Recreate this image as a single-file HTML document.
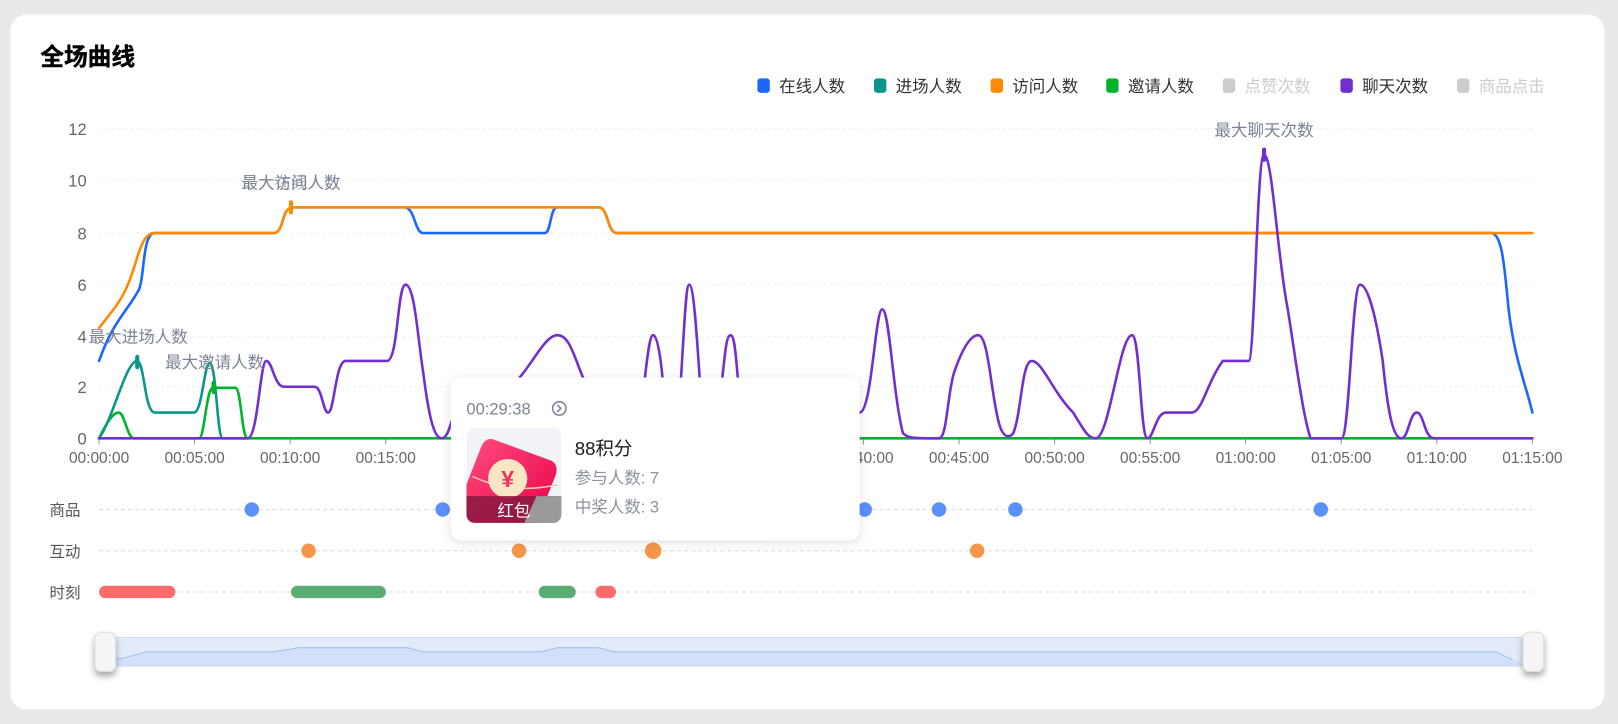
<!DOCTYPE html>
<html><head><meta charset="utf-8"><style>
html,body{margin:0;padding:0;width:1618px;height:724px;overflow:hidden;background:#e8e9eb}
svg{display:block}
text{font-family:"Liberation Sans","Noto Sans CJK SC",sans-serif}
</style></head><body>
<svg width="1618" height="724" viewBox="0 0 1568 702" preserveAspectRatio="none" xmlns="http://www.w3.org/2000/svg">
<defs>
<filter id="sh" x="-10%" y="-20%" width="120%" height="150%"><feDropShadow dx="0" dy="2" stdDeviation="5" flood-color="#000" flood-opacity="0.13"/></filter>
<filter id="hs" x="-100%" y="-50%" width="300%" height="220%"><feDropShadow dx="0" dy="4" stdDeviation="3" flood-color="#000" flood-opacity="0.35"/></filter>
<linearGradient id="rg" x1="0" y1="0" x2="1" y2="1"><stop offset="0" stop-color="#ff4d7e"/><stop offset="1" stop-color="#e8004a"/></linearGradient>
<clipPath id="ic"><rect x="452" y="415" width="92" height="92" rx="8"/></clipPath>
</defs>
<rect x="0" y="0" width="1568" height="702" fill="#e8e9eb"/>
<rect x="10" y="14" width="1545" height="674" rx="16" fill="#fff"/>
<text x="39" y="63" font-size="23" font-weight="bold" fill="#000" stroke="#000" stroke-width="0.4">全场曲线</text>
<!-- legend -->
<g font-size="16" fill="#333">
<rect x="734" y="76" width="12" height="14" rx="3" fill="#1a66ff"/><text x="755" y="89">在线人数</text>
<rect x="847" y="76" width="12" height="14" rx="3" fill="#0a968a"/><text x="868" y="89">进场人数</text>
<rect x="960" y="76" width="12" height="14" rx="3" fill="#ff8a00"/><text x="981" y="89">访问人数</text>
<rect x="1072" y="76" width="12" height="14" rx="3" fill="#00b42a"/><text x="1093" y="89">邀请人数</text>
<rect x="1185" y="76" width="12" height="14" rx="3" fill="#ccc"/><text x="1206" y="89" fill="#ccc">点赞次数</text>
<rect x="1299" y="76" width="12" height="14" rx="3" fill="#722ed1"/><text x="1320" y="89">聊天次数</text>
<rect x="1412" y="76" width="12" height="14" rx="3" fill="#ccc"/><text x="1433" y="89" fill="#ccc">商品点击</text>
</g>
<!-- grid -->
<g stroke="#eceef1" stroke-width="1" stroke-dasharray="3 3">
<line x1="96" y1="125" x2="1485" y2="125"/><line x1="96" y1="175" x2="1485" y2="175"/><line x1="96" y1="226" x2="1485" y2="226"/><line x1="96" y1="276" x2="1485" y2="276"/><line x1="96" y1="326" x2="1485" y2="326"/><line x1="96" y1="375" x2="1485" y2="375"/>
</g>
<g font-size="16" fill="#666" text-anchor="end">
<text x="84" y="131">12</text><text x="84" y="181">10</text><text x="84" y="232">8</text><text x="84" y="282">6</text><text x="84" y="332">4</text><text x="84" y="381">2</text><text x="84" y="431">0</text>
</g>
<line x1="96" y1="425" x2="1485" y2="425" stroke="#999" stroke-width="1"/>
<g stroke="#999" stroke-width="1">
<line x1="96" y1="425" x2="96" y2="431"/><line x1="188.6" y1="425" x2="188.6" y2="431"/><line x1="281.2" y1="425" x2="281.2" y2="431"/><line x1="373.8" y1="425" x2="373.8" y2="431"/><line x1="466.4" y1="425" x2="466.4" y2="431"/><line x1="559" y1="425" x2="559" y2="431"/><line x1="651.6" y1="425" x2="651.6" y2="431"/><line x1="744.2" y1="425" x2="744.2" y2="431"/><line x1="836.8" y1="425" x2="836.8" y2="431"/><line x1="929.4" y1="425" x2="929.4" y2="431"/><line x1="1022" y1="425" x2="1022" y2="431"/><line x1="1114.6" y1="425" x2="1114.6" y2="431"/><line x1="1207.2" y1="425" x2="1207.2" y2="431"/><line x1="1299.8" y1="425" x2="1299.8" y2="431"/><line x1="1392.4" y1="425" x2="1392.4" y2="431"/><line x1="1485" y1="425" x2="1485" y2="431"/>
</g>
<g font-size="15" fill="#666" text-anchor="middle">
<text x="96" y="449">00:00:00</text><text x="188.6" y="449">00:05:00</text><text x="281.2" y="449">00:10:00</text><text x="373.8" y="449">00:15:00</text><text x="466.4" y="449">00:20:00</text><text x="559" y="449">00:25:00</text><text x="651.6" y="449">00:30:00</text><text x="744.2" y="449">00:35:00</text><text x="836.8" y="449">00:40:00</text><text x="929.4" y="449">00:45:00</text><text x="1022" y="449">00:50:00</text><text x="1114.6" y="449">00:55:00</text><text x="1207.2" y="449">01:00:00</text><text x="1299.8" y="449">01:05:00</text><text x="1392.4" y="449">01:10:00</text><text x="1485" y="449">01:15:00</text>
</g>
<!-- lines -->
<g fill="none" stroke-width="2.5" stroke-linejoin="round" stroke-linecap="round">
<path stroke="#00b42a" d="M96 425 C104 408 110 400 115 400 C121 400 123 425 130 425 L193 425 C198 425 200 377 206 376 L228 376 C234 376 234 425 240 425 L1390 425"/>
<path stroke="#0a968a" d="M96 425 C110 405 122 350 133 350 C140 350 140 400 150 400 L188 400 C196 400 198 352 203 352 C210 352 210 425 216 425 L240 425"/>
<path stroke="#1a66ff" d="M96 350 C110 310 125 300 135 280 C140 268 138 226 150 226 L265 226 C276 226 272 201 284 201 L392 201 C402 201 402 226 410 226 L528 226 C534 226 533 201 540 201 L580 201 C590 201 588 226 598 226 L1445 226 C1456 226 1458 260 1462 300 C1468 350 1478 370 1485 400"/>
<path stroke="#ff8a00" d="M96 318 C110 300 120 290 128 265 C135 245 138 226 150 226 L265 226 C276 226 272 201 284 201 L580 201 C590 201 588 226 598 226 L1485 226"/>
<path stroke="#722ed1" d="M96 425 L240 425 C250 425 252 350 258 350 C264 350 266 375 275 375 L305 375 C312 375 313 400 318 400 C324 400 325 350 335 350 L375 350 C386 350 385 276 393 276 C402 276 405 330 410 360 C415 400 420 425 428 425 C436 425 438 400 445 390 L500 370 C515 355 528 325 540 325 C552 325 556 345 565 366 M625 366 C628 340 630 325 633 325 C637 325 640 345 642 366 M660 366 C664 300 665 276 668 276 C672 276 675 320 678 366 M700 366 C703 340 704 325 708 325 C712 325 713 345 715 366 M833 400 C845 400 848 300 855 300 C862 300 865 380 875 420 C880 425 885 425 910 425 C918 425 918 380 925 360 C932 340 940 325 948 325 C958 325 960 380 968 410 C972 425 978 425 982 420 C990 400 990 350 1000 350 C1010 350 1020 380 1040 400 C1052 420 1055 425 1062 425 C1075 425 1085 325 1097 325 C1105 325 1105 425 1112 425 C1118 425 1120 400 1130 400 L1155 400 C1165 400 1170 370 1185 350 L1210 350 C1216 350 1218 150 1225 150 C1233 150 1238 250 1248 300 C1256 350 1262 400 1270 425 L1300 425 C1308 425 1310 276 1318 276 C1326 276 1334 310 1340 350 C1345 400 1350 425 1358 425 C1365 425 1366 400 1373 400 C1380 400 1380 425 1390 425 L1485 425"/>
</g>
<!-- markers -->
<g stroke-width="4" stroke-linecap="round">
<line x1="282" y1="196" x2="282" y2="206" stroke="#ff8a00"/>
<line x1="133" y1="346" x2="133" y2="356" stroke="#0a968a"/>
<line x1="207" y1="371" x2="207" y2="380" stroke="#00b42a"/>
<line x1="1225" y1="145" x2="1225" y2="155" stroke="#722ed1"/>
</g>
<g font-size="16" fill="#7b8394" text-anchor="middle">
<text x="282" y="183">最大访问人数</text><text x="282" y="183" opacity="0.6">最大在线人数</text>
<text x="134" y="332">最大进场人数</text>
<text x="208" y="357">最大邀请人数</text>
<text x="1225" y="132">最大聊天次数</text>
</g>
<!-- rows -->
<g font-size="15" fill="#555">
<text x="48" y="500">商品</text><text x="48" y="540">互动</text><text x="48" y="580">时刻</text>
</g>
<g stroke="#dde0e6" stroke-width="1.2" stroke-dasharray="4 3">
<line x1="96" y1="494" x2="1485" y2="494"/><line x1="96" y1="534" x2="1485" y2="534"/><line x1="96" y1="574" x2="1485" y2="574"/>
</g>
<g fill="#5b8ff9"><circle cx="244" cy="494" r="7"/><circle cx="429" cy="494" r="7"/><circle cx="838" cy="494" r="7"/><circle cx="910" cy="494" r="7"/><circle cx="984" cy="494" r="7"/><circle cx="1280" cy="494" r="7"/></g>
<g fill="#f7954a"><circle cx="299" cy="534" r="7"/><circle cx="503" cy="534" r="7"/><circle cx="633" cy="534" r="8"/><circle cx="947" cy="534" r="7"/></g>
<g stroke-width="12" stroke-linecap="round">
<line x1="102" y1="574" x2="164" y2="574" stroke="#ff6b6b"/>
<line x1="288" y1="574" x2="368" y2="574" stroke="#5aad72"/>
<line x1="528" y1="574" x2="552" y2="574" stroke="#5aad72"/>
<line x1="583" y1="574" x2="591" y2="574" stroke="#ff6b6b"/>
</g>
<!-- slider -->
<rect x="96" y="618" width="1389" height="28" fill="#e3ebfb" stroke="#cfdcf6" stroke-width="1"/>
<path d="M106 640 L120 638 L142 632 L265 632 L290 628 L395 628 L410 632 L525 632 L540 628 L580 628 L595 632 L1450 632 L1466 640 L1485 646 L106 646 Z" fill="#d2e0fa"/>
<path d="M106 640 L120 638 L142 632 L265 632 L290 628 L395 628 L410 632 L525 632 L540 628 L580 628 L595 632 L1450 632 L1466 640" fill="none" stroke="#a3bff0" stroke-width="1"/>
<rect x="92" y="613" width="20" height="38" rx="6" fill="#f5f5f5" stroke="#ddd" filter="url(#hs)"/>
<rect x="1476" y="613" width="20" height="38" rx="6" fill="#f5f5f5" stroke="#ddd" filter="url(#hs)"/>
<!-- tooltip -->
<rect x="437" y="366" width="396" height="158" rx="10" fill="#fff" filter="url(#sh)"/>
<text x="452" y="402" font-size="16" fill="#7b8394">00:29:38</text>
<circle cx="542" cy="396" r="6.5" fill="none" stroke="#7b8394" stroke-width="1.5"/>
<path d="M540 392.5 L543.5 396 L540 399.5" fill="none" stroke="#7b8394" stroke-width="1.5"/>
<g clip-path="url(#ic)">
<rect x="452" y="415" width="92" height="92" fill="#f2f3f6"/>
<path d="M478 426 L535 447 Q542 452 538 462 L520 507 L452 507 L452 470 L466 434 Q470 424 478 426 Z" fill="url(#rg)"/>
<path d="M458 462 Q495 480 540 470" fill="none" stroke="#f7c9a8" stroke-width="1.5"/>
<circle cx="492" cy="464" r="19" fill="#f8e6c4"/>
<text x="492" y="472" font-size="22" font-weight="bold" fill="#f0305e" text-anchor="middle">¥</text>
<rect x="452" y="481" width="92" height="26" fill="#8f1a44" opacity="0.9"/>
<path d="M520 481 L544 481 L544 507 L508 507 Z" fill="#9a9a9a"/>
<text x="498" y="501" font-size="16" fill="#fff" text-anchor="middle">红包</text>
</g>
<text x="557" y="441" font-size="18" fill="#1a1a1a">88积分</text>
<text x="557" y="469" font-size="16" fill="#8a909c">参与人数: 7</text>
<text x="557" y="497" font-size="16" fill="#8a909c">中奖人数: 3</text>
</svg>
</body></html>
